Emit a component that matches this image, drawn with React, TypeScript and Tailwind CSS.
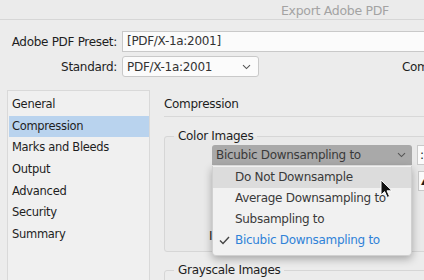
import React from "react"

const font = { fontFamily: '"DejaVu Sans", "Liberation Sans", sans-serif' }

function Chevron({ className }: { className?: string }) {
    return (
        <svg width="9" height="6" viewBox="0 0 9 6" className={className}>
            <path d="M1 1.2 L4.5 4.6 L8 1.2" fill="none" stroke="currentColor" strokeWidth="1.1" />
        </svg>
    )
}

const sections = ["General", "Compression", "Marks and Bleeds", "Output", "Advanced", "Security", "Summary"]
const menuItems = ["Do Not Downsample", "Average Downsampling to", "Subsampling to", "Bicubic Downsampling to"]

export default function App() {
    return (
        <div className="relative w-[424px] h-[280px] overflow-hidden whitespace-nowrap bg-[#ececec] text-[#1e1e1e] text-[12px] tracking-[-0.3px]" style={font}>
            {/* title bar */}
            <div className="h-[20px] border-b border-[#d6d6d6] bg-[#ebebeb] pl-[281px] pt-[2px] text-[12.5px] text-[#a3a3a3]">
                Export Adobe PDF
            </div>

            {/* preset + standard */}
            <div className="flex items-center mt-[11px]">
                <div className="w-[117px] shrink-0 text-right">Adobe PDF Preset:</div>
                <div className="ml-[5px] w-[340px] shrink-0 h-[21px] bg-[#fbfbfb] border border-[#c9c9c9] pl-[4px] leading-[19px] text-[#333]">
                    [PDF/X-1a:2001]
                </div>
            </div>
            <div className="flex items-center mt-[4px]">
                <div className="w-[117px] shrink-0 text-right">Standard:</div>
                <div className="ml-[5px] w-[137px] shrink-0 h-[21px] bg-[#fbfbfb] border border-[#c9c9c9] rounded-[3px] pl-[4px] pr-[7px] flex items-center justify-between text-[#333]">
                    <span>PDF/X-1a:2001</span>
                    <Chevron className="text-[#555]" />
                </div>
                <div className="ml-[143px] shrink-0">Compatibility:</div>
            </div>

            {/* main */}
            <div className="flex mt-[13px]">
                <div className="ml-[7px] w-[143px] shrink-0 h-[200px] bg-[#f0f0f0] border border-[#d9d9d9] pt-[3px]">
                    {sections.map((s) => (
                        <div
                            key={s}
                            className={
                                "h-[21.7px] leading-[21.7px] pl-[3px] ml-[1px] text-[11.5px] " +
                                (s === "Compression" ? "bg-[#b9d3ee]" : "")
                            }
                        >
                            {s}
                        </div>
                    ))}
                </div>

                <div className="ml-[14px] w-[300px] shrink-0">
                    <div className="pt-[5px] pb-[3px] border-b border-[#d8d8d8]">Compression</div>

                    <fieldset className="relative mt-[11px] h-[124px] border border-[#d6d6d6] rounded-[3px] bg-[#e9e9e9]">
                        <legend className="ml-[9px] px-[4px] leading-[16px]">Color Images</legend>
                        <div className="flex items-center mt-[1px]">
                            <div className="ml-[47px] w-[200px] shrink-0 h-[20px] bg-[#a9a9a9] rounded-t-[3px] pl-[4px] pr-[6px] flex items-center justify-between text-[#3a3a3a]">
                                <span>Bicubic Downsampling to</span>
                                <Chevron className="text-[#555]" />
                            </div>
                            <div className="ml-[5px] w-[20px] shrink-0 h-[20px] bg-[#fbfbfb] border border-[#c9c9c9] pl-[2px] leading-[18px]">:</div>
                        </div>
                        <div className="flex mt-[6px]">
                            <div className="ml-[253px] w-[20px] h-[20px] bg-[#fbfbfb] border border-[#c9c9c9] pl-[2px] leading-[18px]">▴</div>
                        </div>
                        <div className="ml-[44px] mt-[36px]">I</div>
                    </fieldset>

                    <fieldset className="mt-[10px] h-[40px] border border-[#d6d6d6] rounded-[3px]">
                        <legend className="ml-[9px] px-[4px] leading-[16px]">Grayscale Images</legend>
                    </fieldset>
                </div>
            </div>

            {/* popup menu */}
            <div className="absolute left-[212px] top-[166px] w-[200px] bg-[#f1f1f1] rounded-b-[4px] shadow-[0_3px_8px_rgba(0,0,0,0.3)] border border-[#d0d0d0] border-t-0 pt-[1px] pb-[4px]">
                {menuItems.map((m, i) => (
                    <div
                        key={m}
                        className={
                            "relative h-[21px] leading-[21px] pl-[22px] " +
                            (i === 0 ? "bg-[#dcdcdc] text-[#3a3a3a]" : i === 3 ? "text-[#2f82d8]" : "text-[#3a3a3a]")
                        }
                    >
                        {i === 3 && (
                            <svg width="11" height="9" viewBox="0 0 11 9" className="absolute left-[6px] top-[6px]">
                                <path d="M1 4.5 L4 7.5 L10 1" fill="none" stroke="#444" strokeWidth="1.4" />
                            </svg>
                        )}
                        {m}
                    </div>
                ))}
            </div>

            {/* mouse cursor */}
            <svg width="14" height="20" viewBox="0 0 14 20" className="absolute left-[380px] top-[179px]">
                <path d="M1 1 L1 16 L4.6 12.6 L7.2 18.4 L9.6 17.4 L7 11.8 L12 11.8 Z" fill="#111" stroke="#fff" strokeWidth="1" />
            </svg>
        </div>
    )
}
